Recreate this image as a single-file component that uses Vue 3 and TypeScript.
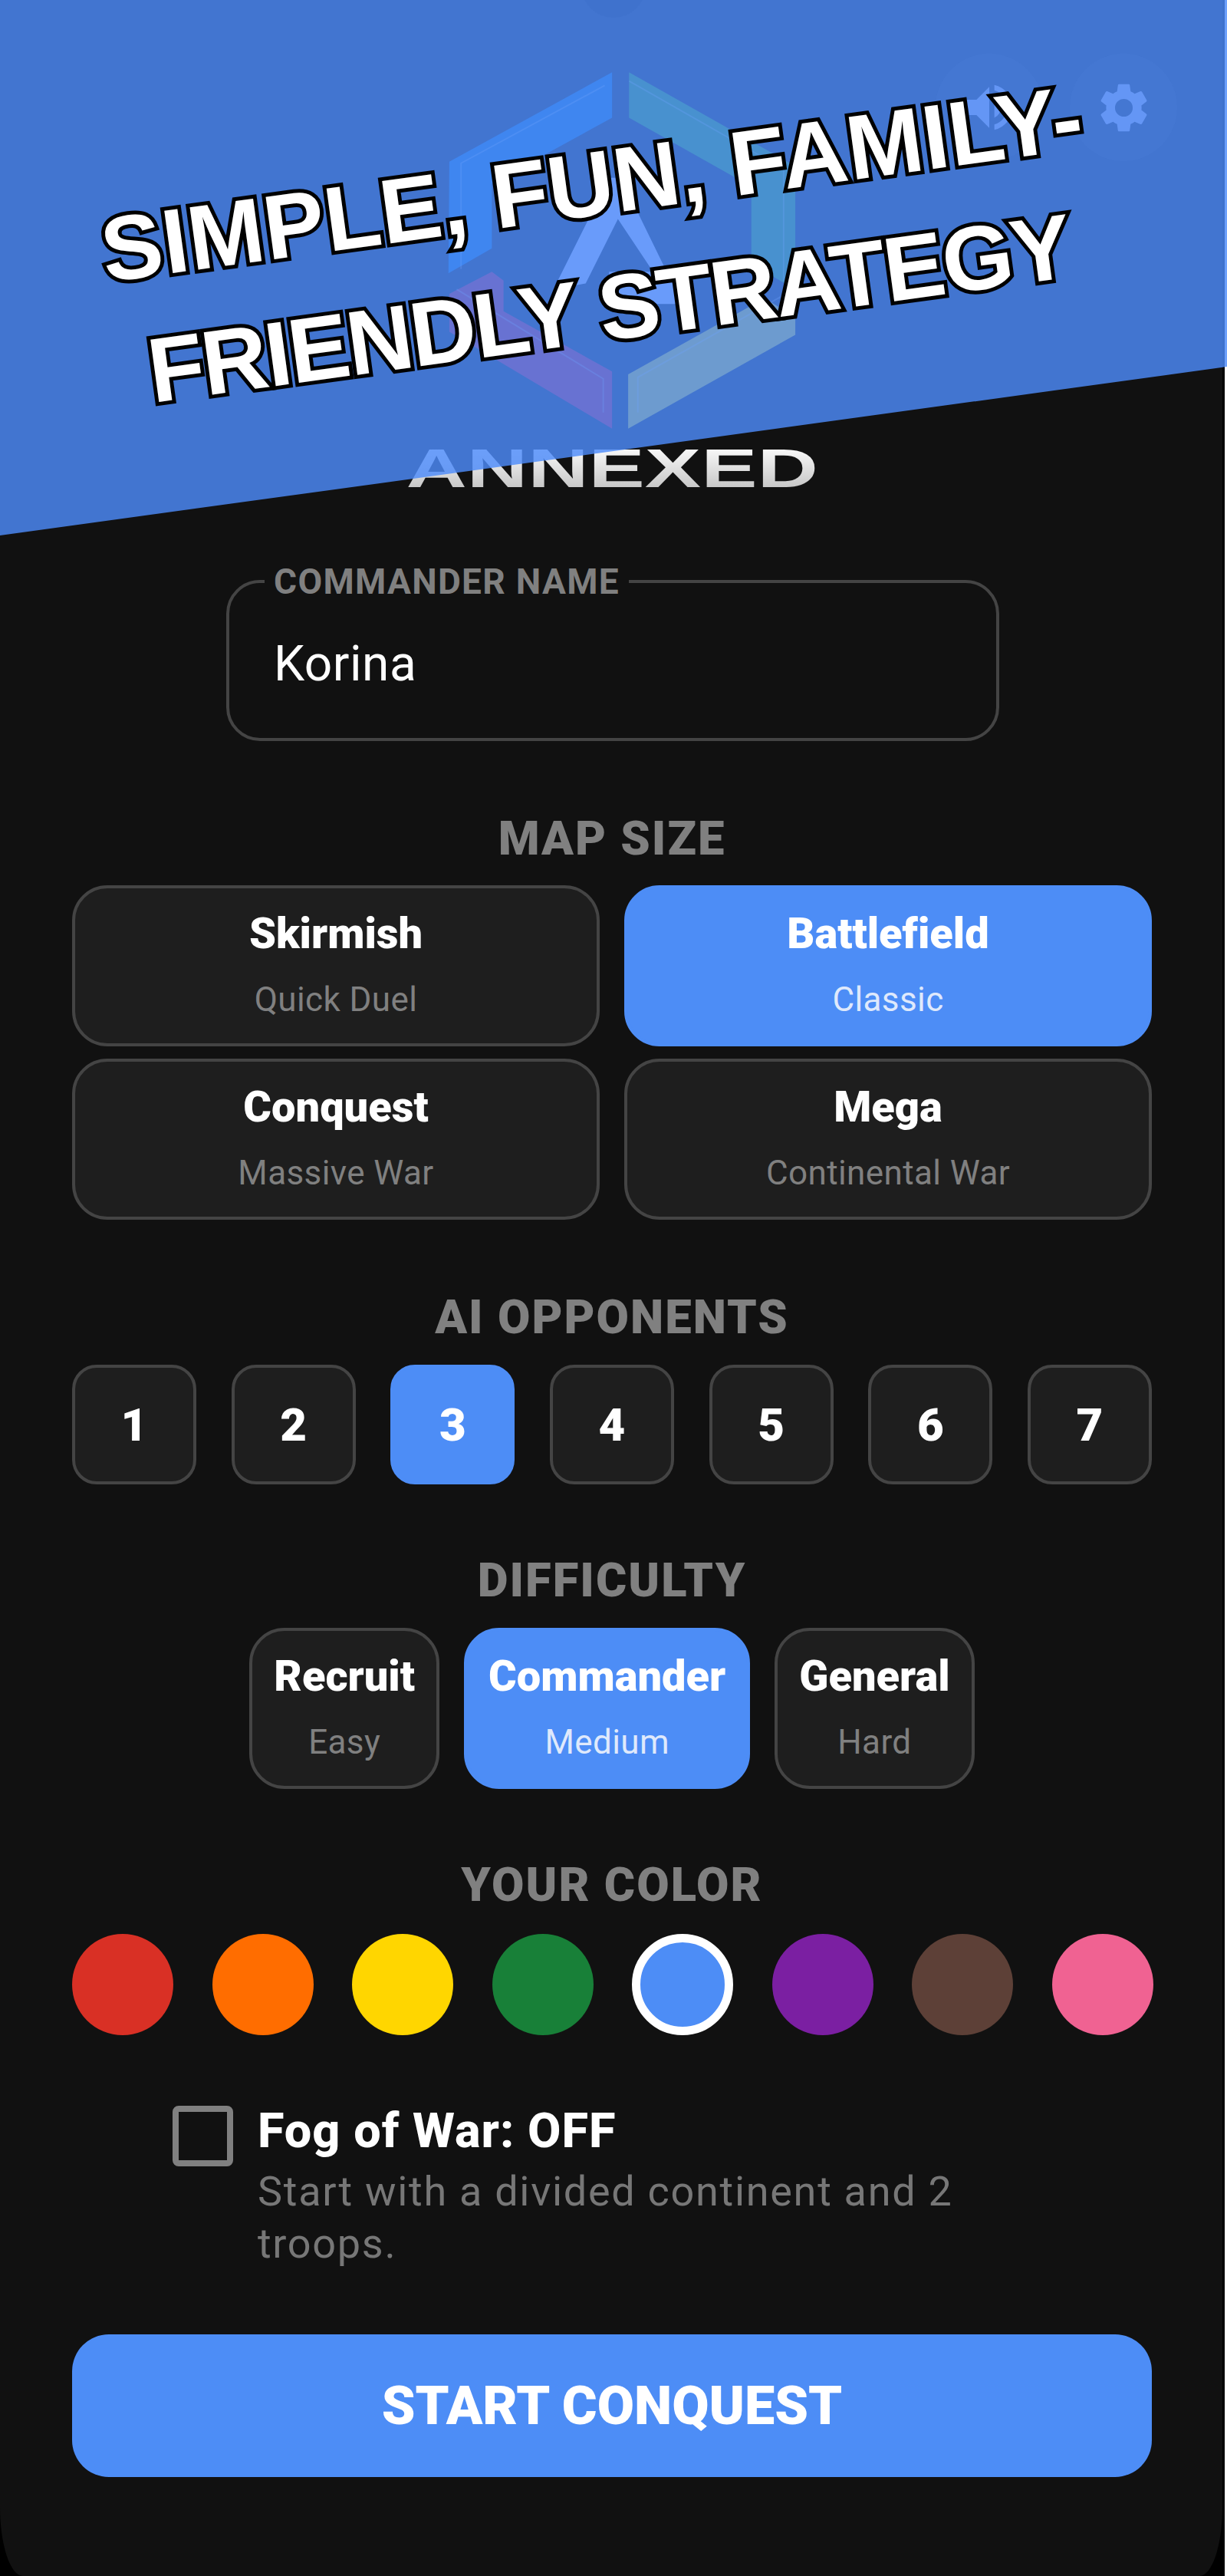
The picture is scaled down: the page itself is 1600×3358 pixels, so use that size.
<script setup lang="ts">
interface Opt { title: string; sub: string; active?: boolean }

const maps: Opt[] = [
  { title: 'Skirmish', sub: 'Quick Duel' },
  { title: 'Battlefield', sub: 'Classic', active: true },
  { title: 'Conquest', sub: 'Massive War' },
  { title: 'Mega', sub: 'Continental War' },
]
const levels: Opt[] = [
  { title: 'Recruit', sub: 'Easy' },
  { title: 'Commander', sub: 'Medium', active: true },
  { title: 'General', sub: 'Hard' },
]
const opponents = [1, 2, 3, 4, 5, 6, 7]
const colors = ['#d93025', '#ff6d00', '#ffd600', '#188038', '#4d8df6', '#7b1fa2', '#5d4037', '#f06292']
</script>

<template>
  <div class="page">
    <div class="frame">
      <div class="screen">
        <div class="top-actions">
          <button class="round-btn">
            <svg viewBox="0 0 24 24" width="80" height="80"><path d="M3 9v6h4l5 5V4L7 9H3zm13.5 3A4.5 4.5 0 0 0 14 7.97v8.05A4.5 4.5 0 0 0 16.5 12zM14 3.23v2.06a7 7 0 0 1 0 13.42v2.06a9 9 0 0 0 0-17.54z" /></svg>
          </button>
          <button class="round-btn">
            <svg viewBox="0 0 24 24" width="77" height="77"><path d="M19.14 12.94c.04-.3.06-.61.06-.94s-.02-.64-.07-.94l2.03-1.58a.49.49 0 0 0 .12-.61l-1.92-3.32a.49.49 0 0 0-.59-.22l-2.39.96a7 7 0 0 0-1.62-.94l-.36-2.54a.48.48 0 0 0-.48-.41h-3.84a.48.48 0 0 0-.47.41l-.36 2.54c-.59.24-1.13.57-1.62.94l-2.39-.96a.48.48 0 0 0-.59.22L2.74 8.87a.48.48 0 0 0 .12.61l2.03 1.58c-.05.3-.09.63-.09.94s.02.64.07.94l-2.03 1.58a.49.49 0 0 0-.12.61l1.92 3.32c.12.22.37.29.59.22l2.39-.96c.5.38 1.03.7 1.62.94l.36 2.54c.05.24.24.41.48.41h3.84c.24 0 .44-.17.47-.41l.36-2.54c.59-.24 1.13-.56 1.62-.94l2.39.96c.22.08.47 0 .59-.22l1.92-3.32a.48.48 0 0 0-.12-.61l-2.01-1.58zM12 15.6A3.6 3.6 0 1 1 12 8.4a3.6 3.6 0 0 1 0 7.2z" /></svg>
          </button>
        </div>

        <div class="brand">
          <svg class="logo" viewBox="220 85 1190 1225">
            <path class="seg-blue" d="M780 90 225 395 222 775 370 690 370 470 780 245Z" />
            <path class="bevel" d="M755 135 265 400V760" />
            <path class="seg-teal" d="M838 90 1405 410V830L1255 745V480L838 245Z" />
            <path class="bevel" d="M838 120 1365 420V800" />
            <path class="seg-purple" d="M225 845 370 770 410 800V905L780 1110V1305L225 975Z" />
            <path class="bevel" d="M250 830 750 1135V1250" />
            <path class="seg-pale" d="M835 1120 1300 860 1405 925V985L835 1305Z" />
            <path class="bevel" d="M868 1250V1130L1365 850" />
            <path class="seg-a" d="M770 450 810 450 1020 880 770 880V770H920L800 590 690 810 580 830Z" />
          </svg>
          <div class="wordmark"><span>ANNEXED</span></div>
        </div>

        <fieldset class="name-field">
          <legend>COMMANDER NAME</legend>
          <div class="name-value">Korina</div>
        </fieldset>

        <h2 class="section-title map-title">MAP SIZE</h2>
        <div class="map-grid">
          <button v-for="m in maps" :key="m.title" class="opt" :class="{ active: m.active }">
            <span class="opt-title">{{ m.title }}</span>
            <span class="opt-sub">{{ m.sub }}</span>
          </button>
        </div>

        <h2 class="section-title ai-title">AI OPPONENTS</h2>
        <div class="num-row">
          <button v-for="n in opponents" :key="n" class="num" :class="{ active: n === 3 }">{{ n }}</button>
        </div>

        <h2 class="section-title diff-title">DIFFICULTY</h2>
        <div class="diff-row">
          <button v-for="l in levels" :key="l.title" class="opt diff" :class="{ active: l.active }">
            <span class="opt-title">{{ l.title }}</span>
            <span class="opt-sub">{{ l.sub }}</span>
          </button>
        </div>

        <h2 class="section-title color-title">YOUR COLOR</h2>
        <div class="color-row">
          <span
            v-for="c in colors"
            :key="c"
            class="swatch"
            :class="{ picked: c === '#4d8df6' }"
            :style="{ background: c }"
          ></span>
        </div>

        <div class="fog">
          <span class="check"></span>
          <div class="fog-text">
            <div class="fog-title">Fog of War: OFF</div>
            <div class="fog-sub">Start with a divided continent and 2 troops.</div>
          </div>
        </div>

        <button class="start">START CONQUEST</button>
        <div class="notch"></div>
      </div>
    </div>

    <!-- promo banner sitting over the app screen -->
    <div class="banner"></div>
    <div class="headline">
      <div class="line-one">SIMPLE, FUN, FAMILY-</div>
      <div class="line-two">FRIENDLY STRATEGY</div>
    </div>
  </div>
</template>

<style>
html,
body {
  margin: 0;
  background: #fff;
}
</style>

<style scoped>
.page {
  position: relative;
  width: 1600px;
  height: 3358px;
  overflow: hidden;
  background: #fff;
}

.frame {
  width: 1597px;
  height: 3358px;
  background: #000;
}

.screen {
  position: relative;
  width: 1594px;
  height: 3358px;
  box-sizing: border-box;
  padding: 92px 92px 0 94px;
  overflow: hidden;
  background: #111;
  border-radius: 0 0 30px 30px / 0 0 90px 90px;
  font-family: Roboto, "Liberation Sans", sans-serif;
  font-variant-ligatures: none;
  color: #fff;
}

button {
  font-family: inherit;
  font-variant-ligatures: inherit;
  color: inherit;
  padding: 0;
}

.top-actions {
  position: absolute;
  top: 70px;
  left: 1220px;
  display: flex;
  gap: 35px;
}

.round-btn {
  width: 140px;
  height: 140px;
  display: flex;
  align-items: center;
  justify-content: center;
  border: 0;
  border-radius: 50%;
  background: #1e1e1e;
}

.round-btn svg {
  fill: #cdc8de;
}

.brand {
  display: flex;
  flex-direction: column;
  align-items: center;
  height: 644px;
}

.logo {
  width: 455px;
  height: 469px;
  margin-left: 26px;
  flex: none;
}

.seg-blue { fill: #006fc2; }
.seg-teal { fill: #32ac10; }
.seg-purple { fill: #e00520; }
.seg-pale { fill: #ffe410; }
.seg-a { fill: #e9e4fa; }

.bevel {
  fill: none;
  stroke: rgba(255, 255, 255, 0.3);
  stroke-width: 5;
}

.wordmark {
  margin-top: 22px;
  height: 56px;
  line-height: 56px;
  font-family: "Liberation Sans", sans-serif;
  font-weight: 700;
  font-size: 70px;
  white-space: nowrap;
}

.wordmark span {
  display: inline-block;
  transform: scaleX(1.57);
  background: linear-gradient(#fafafa, #c4c4c4);
  -webkit-background-clip: text;
  background-clip: text;
  color: transparent;
}

.name-field {
  box-sizing: border-box;
  width: 1008px;
  height: 230px;
  margin: 0 0 0 201px;
  padding: 0 58px;
  border: 4px solid #444;
  border-radius: 44px;
}

.name-field legend {
  padding: 0 12px;
  margin-left: -12px;
  font-size: 46px;
  font-weight: 700;
  line-height: 44px;
  color: #808080;
  letter-spacing: 1.3px;
}

.name-value {
  margin-top: 46px;
  font-size: 64px;
  line-height: 80px;
  letter-spacing: 0.5px;
}

.section-title {
  margin: 0;
  text-align: center;
  font-size: 61.5px;
  line-height: 70px;
  font-weight: 900;
  letter-spacing: 2px;
  color: #808080;
}

.map-title { margin-top: 92px; }
.ai-title { margin-top: 92px; }
.diff-title { margin-top: 90px; }
.color-title { margin-top: 90px; }

.map-grid {
  display: grid;
  grid-template-columns: 1fr 1fr;
  gap: 16px 32px;
  margin-top: 26px;
}

.opt {
  display: flex;
  flex-direction: column;
  align-items: center;
  justify-content: center;
  gap: 27px;
  height: 210px;
  box-sizing: border-box;
  padding-bottom: 5px;
  background: #1e1e1e;
  border: 4px solid #444;
  border-radius: 46px;
}

.opt.active {
  background: #4d8df6;
  border-color: #4d8df6;
}

.opt-title {
  font-size: 56px;
  line-height: 66px;
  font-weight: 900;
}

.opt-sub {
  font-size: 44px;
  line-height: 52px;
  color: #808080;
  letter-spacing: 0.4px;
}

.opt.active .opt-sub {
  color: #dfe9fc;
}

.num-row {
  display: flex;
  justify-content: space-between;
  margin-top: 27px;
}

.num {
  width: 162px;
  height: 156px;
  box-sizing: border-box;
  background: #1e1e1e;
  border: 4px solid #444;
  border-radius: 32px;
  font-size: 60px;
  font-weight: 900;
}

.num.active {
  background: #4d8df6;
  border-color: #4d8df6;
}

.diff-row {
  display: flex;
  justify-content: center;
  gap: 32px;
  margin-top: 27px;
}

.diff {
  padding: 0 28px 5px;
}

.color-row {
  display: flex;
  justify-content: space-between;
  margin: 29px -2px 0 0;
}

.swatch {
  width: 132px;
  height: 132px;
  box-sizing: border-box;
  border-radius: 50%;
}

.swatch.picked {
  border: 11px solid #fff;
}

.fog {
  display: flex;
  gap: 32px;
  margin: 92px 0 0 131px;
}

.check {
  flex: none;
  width: 79px;
  height: 79px;
  box-sizing: border-box;
  border: 8px solid #808080;
  border-radius: 8px;
}

.fog-text {
  width: 960px;
}

.fog-title {
  font-size: 63px;
  line-height: 66px;
  font-weight: 800;
  letter-spacing: 1px;
}

.fog-sub {
  margin-top: 12px;
  font-size: 54px;
  line-height: 68px;
  color: #777;
  letter-spacing: 1.7px;
}

.start {
  display: block;
  width: 100%;
  height: 186px;
  margin-top: 84px;
  background: #4d8df6;
  border: 0;
  border-radius: 48px;
  font-size: 70px;
  font-weight: 900;
}

.notch {
  position: absolute;
  top: -61px;
  left: 758px;
  width: 84px;
  height: 84px;
  border-radius: 50%;
  background: #000;
}

.banner {
  position: absolute;
  inset: 0;
  background: rgba(77, 139, 250, 0.82);
  clip-path: polygon(0 0, 1600px 0, 1600px 478px, 0 698px);
}

.headline {
  position: absolute;
  top: 157px;
  left: 43px;
  width: 1480px;
  text-align: center;
  font-family: "Liberation Sans", sans-serif;
  font-weight: 700;
  font-size: 119px;
  line-height: 164px;
  color: #fff;
  -webkit-text-stroke: 10px #000;
  paint-order: stroke fill;
  transform: rotate(-7.8deg);
}

.line-one {
  letter-spacing: 0.6px;
}

.line-two {
  letter-spacing: -2.5px;
}
</style>
